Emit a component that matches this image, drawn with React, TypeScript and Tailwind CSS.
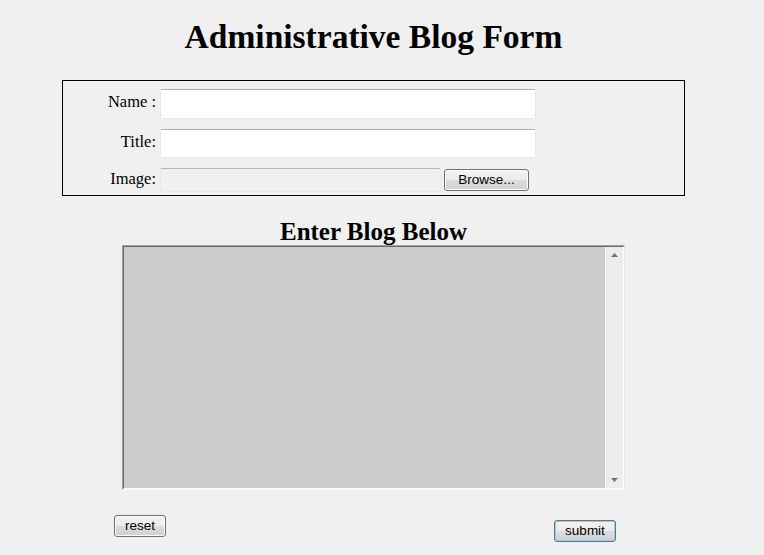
import React from "react";

const btn =
  "flex items-center justify-center rounded-[3px] border border-[#707070] bg-[linear-gradient(#f2f2f2_0%,#ebebeb_50%,#dddddd_51%,#cfcfcf_100%)] font-['Liberation_Sans',Arial,sans-serif] text-[13.5px] leading-[16px] text-black";

function Up() {
  return (
    <svg width="7" height="4" viewBox="0 0 7 4">
      <path d="M3.5 0 L7 4 L0 4 Z" fill="#707070" />
    </svg>
  );
}
function Down() {
  return (
    <svg width="7" height="4" viewBox="0 0 7 4">
      <path d="M0 0 L7 0 L3.5 4 Z" fill="#707070" />
    </svg>
  );
}

export default function App() {
  return (
    <div className="min-h-[555px] w-full bg-[#eff0ef]">
      <div className="w-[747px] pt-[18px] pb-[13px] font-['Liberation_Serif','Times_New_Roman',serif] text-black">
        <h1 className="text-center text-[33.5px] font-bold leading-[38px]">
          Administrative Blog Form
        </h1>

        <div className="mx-auto mt-[24px] w-[623px] border border-black pt-[8px] pb-[3px]">
          <div className="flex items-start">
            <label className="mt-[4px] w-[97px] pr-[4px] text-right text-[16.5px] leading-[18px]">
              Name :
            </label>
            <input
              type="text"
              className="h-[30px] w-[376px] rounded-[2px] border border-[#e3e9ef] border-t-[#abadb3] bg-white outline-none"
            />
          </div>
          <div className="mt-[10px] flex items-start">
            <label className="mt-[4px] w-[97px] pr-[4px] text-right text-[16.5px] leading-[18px]">
              Title:
            </label>
            <input
              type="text"
              className="h-[29px] w-[376px] rounded-[2px] border border-[#e3e9ef] border-t-[#abadb3] bg-white outline-none"
            />
          </div>
          <div className="mt-[10px] flex items-start">
            <label className="mt-[2px] w-[97px] pr-[4px] text-right text-[16.5px] leading-[18px]">
              Image:
            </label>
            <div className="h-[24px] w-[281px] rounded-[2px] border border-[#e3e9ef] border-t-[#b5b7bb] bg-[#eff0ef]" />
            <button className={`${btn} ml-[3px] mt-[1px] h-[22px] w-[85px] shadow-[inset_0_0_0_1px_#fcfcfc]`}>
              Browse...
            </button>
          </div>
        </div>

        <h2 className="mt-[22px] text-center text-[25px] font-bold leading-[27px]">
          Enter Blog Below
        </h2>

        <div className="mx-auto flex h-[245px] w-[503px] border border-t-[#a0a0a0] border-l-[#a0a0a0] border-r-[#e6e6e6] border-b-[#f8f8f8]">
          <div className="flex flex-1 border border-t-[#696969] border-l-[#696969] border-r-[#ffffff] border-b-[#ffffff]">
            <div className="flex-1 bg-[#cccccc]" />
            <div className="flex w-[18px] flex-col items-center justify-between border-l border-l-[#fafafa] bg-[#ececec] pt-[6px] pb-[6px] pr-[1px]">
              <Up />
              <Down />
            </div>
          </div>
        </div>

        <div className="mt-[25px] flex items-start">
          <button className={`${btn} ml-[114px] h-[22px] w-[52px] shadow-[inset_0_0_0_1px_#fcfcfc]`}>
            reset
          </button>
          <button
            className={`${btn} ml-[388px] mt-[5px] h-[22px] w-[62px] border-[#3c7fb1] shadow-[inset_0_0_0_1px_#8fd0f2]`}
          >
            submit
          </button>
        </div>
      </div>
    </div>
  );
}
